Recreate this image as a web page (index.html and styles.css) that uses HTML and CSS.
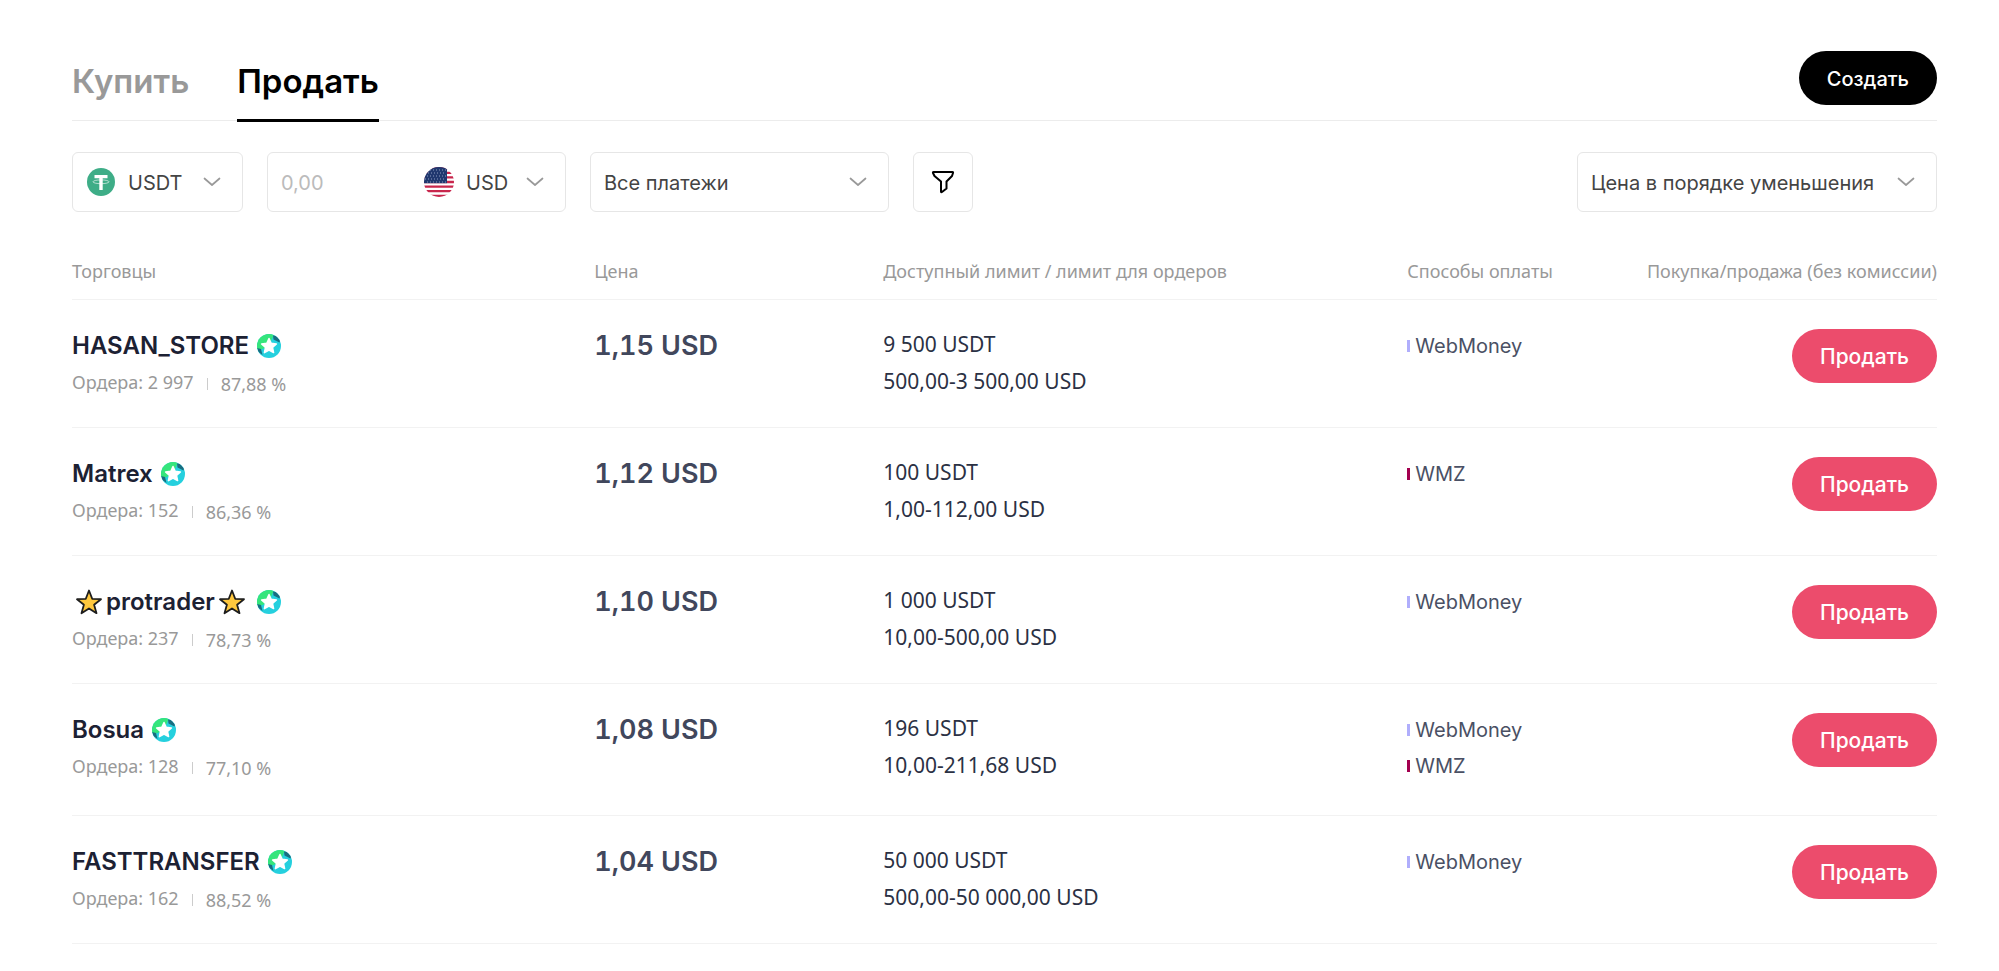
FILE: index.html
```html
<!DOCTYPE html>
<html lang="ru">
<head>
<meta charset="utf-8">
<title>P2P</title>
<link rel="stylesheet" href="styles.css">
</head>
<body>
<svg class="sprite" aria-hidden="true">
  <defs>
    <symbol id="chevron" viewBox="0 0 18 10"><path d="M1.500 1.500 9 8l7.500-6.500" fill="none" stroke="currentColor" stroke-width="1.700" stroke-linecap="round" stroke-linejoin="round"/></symbol>
    <clipPath id="badge-clip"><circle cx="12" cy="12" r="12"/></clipPath>
    <symbol id="badge" viewBox="0 0 24 24">
      <g clip-path="url(#badge-clip)">
        <rect width="24" height="24" fill="#25d0de"/>
        <path d="M0 0h17L12 12 3 16 0 15z" fill="#35e57c"/>
        <path d="M16 1.500l3 0 4 5-.5 2-6-3z" fill="#1a6d80"/>
        <path d="M0 14l4 1 1.500 6-4-3z" fill="#1a6d80"/>
      </g>
      <path d="M12 4.500l2.200 4.800 5.200.6-3.900 3.500 1.100 5.200-4.600-2.600-4.600 2.600 1.100-5.200-3.900-3.500 5.200-.6z" fill="#fff" stroke="#fff" stroke-width="1.500" stroke-linejoin="round"/>
    </symbol>
    <symbol id="star" viewBox="0 0 28 28"><path d="M14 2.500l3.200 8.300 8.800.4-6.900 5.500 2.400 8.500L14 20.400l-7.500 4.800 2.400-8.500L2 11.200l8.800-.4z" fill="#ffc83d" stroke="#1d1d1d" stroke-width="1.800" stroke-linejoin="round"/></symbol>
  </defs>
</svg>
<main class="page">
  <header class="top">
    <nav class="tabs">
      <a class="tab" href="#buy">Купить</a>
      <a class="tab tab-active" href="#sell" aria-current="page">Продать</a>
    </nav>
    <button class="btn btn-dark" type="button">Создать</button>
  </header>

  <form class="filters">
    <div class="field coin">
      <svg class="coin-icon" viewBox="0 0 28 28" aria-hidden="true">
        <circle cx="14" cy="14" r="14" fill="#3ead87"/>
        <path d="M7.500 7h13v3.200h-4.800V22h-3.400V10.200H7.500z" fill="#fff"/>
        <ellipse cx="14" cy="13.800" rx="8" ry="1.900" fill="none" stroke="#fff" stroke-width=".6"/>
      </svg>
      <select class="select" aria-label="Монета"><option>USDT</option></select>
      <svg class="chevron" aria-hidden="true"><use href="#chevron"/></svg>
    </div>
    <div class="field amount">
      <input class="input" type="text" placeholder="0,00" aria-label="Сумма">
      <div class="currency">
        <svg class="flag" viewBox="0 0 30 30" aria-hidden="true">
          <clipPath id="flag-clip"><circle cx="15" cy="15" r="15"/></clipPath>
          <g clip-path="url(#flag-clip)">
            <rect width="30" height="30" fill="#fff"/>
            <path d="M0 1.200h30M0 5.800h30M0 10.400h30M0 15h30M0 19.600h30M0 24.200h30M0 28.800h30" stroke="#c8264c" stroke-width="2.300"/>
            <rect width="23" height="16.200" fill="#20386f"/>
            <path d="M3 3h19M1 6h21M3 9h19M1 12h21M3 15h19" stroke="#8c9bc0" stroke-width="1" stroke-dasharray="1 2"/>
          </g>
        </svg>
        <select class="select" aria-label="Валюта"><option>USD</option></select>
        <svg class="chevron" aria-hidden="true"><use href="#chevron"/></svg>
      </div>
    </div>
    <div class="field payment">
      <select class="select" aria-label="Способ оплаты"><option>Все платежи</option></select>
      <svg class="chevron" aria-hidden="true"><use href="#chevron"/></svg>
    </div>
    <button class="filter-btn" type="button" aria-label="Фильтр">
      <svg class="filter-icon" viewBox="0 0 24 24" aria-hidden="true"><path d="M2.500 2h19q.8 0 .5 1l-1 3-5.500 5.500v7L11 22q-1 .6-1-.6V11.500L3.500 6 2 3q-.3-1 .5-1z" fill="none" stroke="#000" stroke-width="2" stroke-linejoin="round"/></svg>
    </button>
    <div class="field sort">
      <select class="select" aria-label="Сортировка"><option>Цена в порядке уменьшения</option></select>
      <svg class="chevron" aria-hidden="true"><use href="#chevron"/></svg>
    </div>
  </form>

  <table class="offers">
    <colgroup><col class="c-trader"><col class="c-price"><col class="c-limit"><col class="c-pay"><col class="c-action"></colgroup>
    <thead>
      <tr><th>Торговцы</th><th>Цена</th><th>Доступный лимит / лимит для ордеров</th><th>Способы оплаты</th><th class="action">Покупка/продажа (без комиссии)</th></tr>
    </thead>
    <tbody>
      <tr>
        <td><div class="name">HASAN_STORE<svg class="badge" aria-hidden="true"><use href="#badge"/></svg></div><div class="stats"><span>Ордера: 2 997</span><span class="rate">87,88 %</span></div></td>
        <td class="price">1,15 USD</td>
        <td class="limit"><div>9 500 USDT</div><div>500,00-3 500,00 USD</div></td>
        <td class="pay"><div class="method webmoney">WebMoney</div></td>
        <td class="action"><button class="btn btn-sell" type="button">Продать</button></td>
      </tr>
      <tr>
        <td><div class="name">Matrex<svg class="badge" aria-hidden="true"><use href="#badge"/></svg></div><div class="stats"><span>Ордера: 152</span><span class="rate">86,36 %</span></div></td>
        <td class="price">1,12 USD</td>
        <td class="limit"><div>100 USDT</div><div>1,00-112,00 USD</div></td>
        <td class="pay"><div class="method wmz">WMZ</div></td>
        <td class="action"><button class="btn btn-sell" type="button">Продать</button></td>
      </tr>
      <tr>
        <td><div class="name"><svg class="star" aria-hidden="true"><use href="#star"/></svg>protrader<svg class="star" aria-hidden="true"><use href="#star"/></svg><svg class="badge" aria-hidden="true"><use href="#badge"/></svg></div><div class="stats"><span>Ордера: 237</span><span class="rate">78,73 %</span></div></td>
        <td class="price">1,10 USD</td>
        <td class="limit"><div>1 000 USDT</div><div>10,00-500,00 USD</div></td>
        <td class="pay"><div class="method webmoney">WebMoney</div></td>
        <td class="action"><button class="btn btn-sell" type="button">Продать</button></td>
      </tr>
      <tr class="multi">
        <td><div class="name">Bosua<svg class="badge" aria-hidden="true"><use href="#badge"/></svg></div><div class="stats"><span>Ордера: 128</span><span class="rate">77,10 %</span></div></td>
        <td class="price">1,08 USD</td>
        <td class="limit"><div>196 USDT</div><div>10,00-211,68 USD</div></td>
        <td class="pay"><div class="method webmoney">WebMoney</div><div class="method wmz">WMZ</div></td>
        <td class="action"><button class="btn btn-sell" type="button">Продать</button></td>
      </tr>
      <tr>
        <td><div class="name">FASTTRANSFER<svg class="badge" aria-hidden="true"><use href="#badge"/></svg></div><div class="stats"><span>Ордера: 162</span><span class="rate">88,52 %</span></div></td>
        <td class="price">1,04 USD</td>
        <td class="limit"><div>50 000 USDT</div><div>500,00-50 000,00 USD</div></td>
        <td class="pay"><div class="method webmoney">WebMoney</div></td>
        <td class="action"><button class="btn btn-sell" type="button">Продать</button></td>
      </tr>
    </tbody>
  </table>
</main>
</body>
</html>
```
FILE: styles.css
```css
* { box-sizing: border-box; }
body {
  margin: 0;
  background: #fff;
  color: #2b3144;
  font: 400 20px/36px Inter, "Noto Sans", sans-serif;
}
button, select, input { font: inherit; color: inherit; }
.sprite { position: absolute; width: 0; height: 0; }
.page { padding: 50px 62px 28px 72px; }

.top {
  display: flex;
  align-items: flex-start;
  justify-content: space-between;
  border-bottom: 1px solid #ececec;
}
.tabs { display: flex; gap: 48px; margin-bottom: -2px; }
.tab {
  padding: 7px 0 14px;
  border-bottom: 3px solid transparent;
  color: #999;
  font-size: 33px;
  font-weight: 600;
  line-height: 48px;
  text-decoration: none;
}
.tab-active { color: #000; border-color: #000; }

.btn {
  height: 54px;
  padding: 2px 28px 0;
  border: 0;
  border-radius: 27px;
  color: #fff;
  font-weight: 500;
  line-height: 28px;
}
.btn-dark { margin-top: 1px; background: #000; }
.btn-sell { background: #ec4c6c; font-size: 21px; }

.filters {
  display: flex;
  gap: 24px;
  margin-top: 31px;
  color: #444;
}
.field {
  display: grid;
  align-items: center;
  height: 60px;
  border: 1px solid #e6e6e6;
  border-radius: 6px;
}
.field > *, .currency > * { grid-row: 1; grid-column: 1; }
.select {
  width: 100%;
  height: 58px;
  padding: 2px 13px 0;
  border: 0;
  background: none;
  appearance: none;
}
.chevron {
  justify-self: end;
  width: 18px;
  height: 10px;
  margin-right: 21px;
  color: #999;
  pointer-events: none;
}
.coin { width: 171px; }
.coin .select { padding-left: 55px; }
.coin-icon { width: 28px; height: 28px; margin-left: 14px; }
.field.amount { display: flex; width: 299px; }
.input {
  flex: 1;
  min-width: 0;
  height: 58px;
  padding: 2px 13px 0;
  border: 0;
  background: none;
}
.input::placeholder { color: #bbb; opacity: 1; }
.currency { display: grid; align-items: center; width: 142px; }
.currency .select { padding-left: 43px; }
.flag { width: 30px; height: 30px; margin-left: 1px; }
.payment { width: 299px; }
.filter-btn {
  display: grid;
  place-items: center;
  width: 60px;
  height: 60px;
  padding: 0;
  border: 1px solid #e6e6e6;
  border-radius: 6px;
  background: #fff;
}
.filter-icon { width: 24px; height: 24px; }
.sort { width: 360px; margin-left: auto; }

.offers {
  width: 100%;
  margin-top: 38px;
  border-collapse: collapse;
  table-layout: fixed;
}
.c-trader { width: 28%; }
.c-price { width: 15.500%; }
.c-limit { width: 28.100%; }
.c-pay { width: 12.400%; }
.c-action { width: 16%; }
.offers th {
  height: 49px;
  padding: 5px 0 11px;
  border-bottom: 1px solid #f2f2f2;
  color: #999;
  font-family: "Noto Sans", sans-serif;
  font-size: 18px;
  font-weight: 400;
  line-height: 24px;
  text-align: left;
  white-space: nowrap;
}
.offers td {
  height: 128px;
  padding: 28px 0 22px;
  border-bottom: 1px solid #f2f2f2;
  vertical-align: top;
}
.offers .multi td { height: 132px; }
.offers .action { text-align: right; }
.offers td.action { padding-top: 29px; }
.name {
  display: flex;
  align-items: center;
  color: #1c2133;
  font-size: 24px;
  font-weight: 600;
}
.badge { width: 24px; height: 24px; margin-left: 8px; }
.star { width: 28px; height: 28px; margin: 0 3px; }
.stats {
  display: flex;
  align-items: center;
  padding-top: 4px;
  color: #999;
  font-family: "Noto Sans", sans-serif;
  font-size: 18px;
  line-height: 26px;
}
.rate { display: flex; align-items: center; padding-top: 3px; }
.rate::before {
  content: "";
  width: 1px;
  height: 12px;
  margin: 0 13px;
  background: #ccc;
}
.offers .price {
  color: #41475c;
  font-size: 27px;
  font-weight: 600;
  font-variant-numeric: tabular-nums;
}
.offers .limit {
  padding-top: 26px;
  font-family: "Noto Sans", sans-serif;
  font-size: 21px;
  line-height: 37px;
}
.method { display: flex; align-items: center; gap: 5px; color: #4a5064; }
.method::before { content: ""; width: 3px; height: 12px; background: #b0aefc; }
.wmz::before { background: #a3004f; }
```
